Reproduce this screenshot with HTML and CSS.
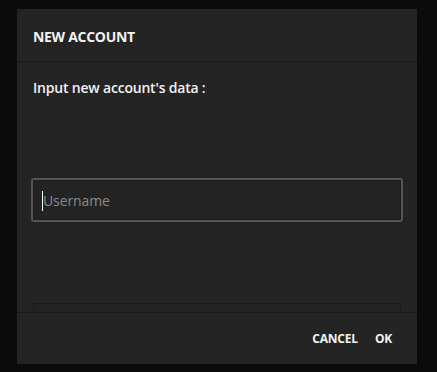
FILE: index.html
```html
<!DOCTYPE html>
<html lang="en">
<head>
  <meta charset="UTF-8" />
  <title>New account</title>
  <link rel="stylesheet" href="styles.css">
</head>
<body>
  <div class="dialog">
    <div class="dialog-title">NEW ACCOUNT</div>
    <div class="dialog-body">
      <p class="hint">Input new account's data :</p>
      <div class="field focused">
        <span class="caret"></span>
        <input type="text" placeholder="Username">
      </div>
      <div class="field">
        <input type="password" placeholder="Password">
      </div>
    </div>
    <div class="dialog-actions">
      <button class="btn">CANCEL</button>
      <button class="btn">OK</button>
    </div>
  </div>
</body>
</html>
```

FILE: styles.css
```css
html {
  background: #0b0b0b;
}
body {
  margin: 0;
  padding: 9px 20px 8px 17px;
  font-family: 'Open Sans', 'Noto Sans', sans-serif;
  color: #f2f2f2;
}
.dialog {
  width: 400px;
  height: 355px;
  background: #242424;
  display: flex;
  flex-direction: column;
}
.dialog-title {
  height: 53px;
  box-sizing: border-box;
  border-bottom: 1px solid #1a1a1a;
  padding: 2px 16px 0;
  display: flex;
  align-items: center;
  font-size: 14px;
  font-weight: 700;
  letter-spacing: -0.3px;
}
.dialog-body {
  flex: 1;
  overflow: hidden;
  padding: 0 16px;
}
.hint {
  margin: 16px 0 0;
  font-size: 14px;
  line-height: 20px;
  font-weight: 600;
  letter-spacing: -0.2px;
}
.field {
  position: relative;
  height: 40px;
  border: 1px solid #1a1a1a;
  background: #232323;
  box-sizing: border-box;
}
.focused {
  margin-top: 82px;
  outline: 2px solid #555;
  border-radius: 1px;
}
.field + .field {
  margin-top: 83px;
}
.field input {
  width: 100%;
  height: 100%;
  box-sizing: border-box;
  background: transparent;
  border: none;
  outline: none;
  padding: 0 0 0 9px;
  font-family: 'Open Sans', 'Noto Sans', sans-serif;
  font-size: 14px;
  letter-spacing: -0.1px;
  color: #eee;
}
.field input::placeholder {
  color: #8a8a8a;
}
.caret {
  position: absolute;
  left: 8px;
  top: 10px;
  width: 1px;
  height: 20px;
  background: #fff;
}
.dialog-actions {
  height: 51px;
  border-top: 1px solid #1a1a1a;
  display: flex;
  justify-content: flex-end;
  align-items: center;
  padding-right: 17px;
  gap: 1px;
}
.btn {
  background: none;
  border: none;
  color: #f2f2f2;
  font-family: 'Open Sans', 'Noto Sans', sans-serif;
  font-size: 12px;
  font-weight: 700;
  letter-spacing: -0.2px;
  padding: 8px 8px;
  cursor: pointer;
}
```
